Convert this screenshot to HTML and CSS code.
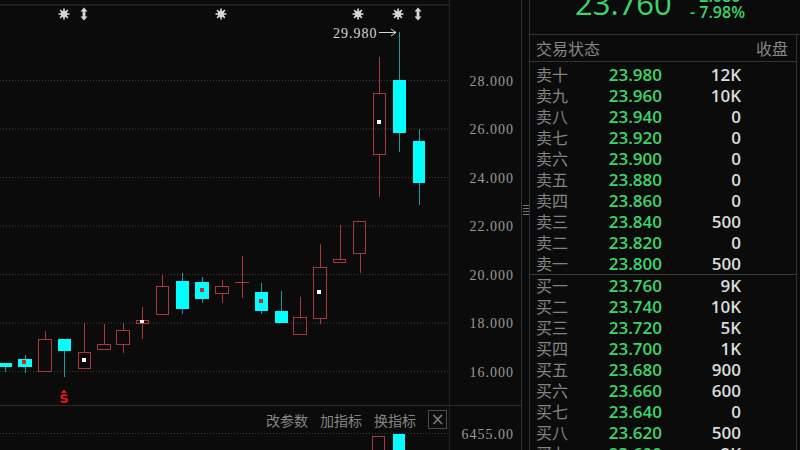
FILE: index.html
```html
<!DOCTYPE html>
<html lang="zh-CN">
<head>
    <meta charset="UTF-8">
    <meta name="viewport" content="width=device-width, initial-scale=1.0">
    <title>K线 - 盘口</title>
    <link rel="stylesheet" href="styles.css">
</head>
<body>
    <div class="terminal">
        <!-- 左侧：K线主图 + 副图 -->
        <div class="chart-pane">
            <svg class="kline" width="521" height="405" viewBox="0 0 521 405">
                <defs>
                    <g id="sun">
                        <circle r="3.2" fill="#d6d6d6"/>
                        <path d="M0 -5.5V5.5M-5.5 0H5.5M-3.9 -3.9L3.9 3.9M-3.9 3.9L3.9 -3.9" stroke="#d6d6d6" stroke-width="1.6"/>
                    </g>
                    <path id="updown" d="M0 -6.5L3.5 -2.5H1.4V2.5H3.5L0 6.5L-3.5 2.5H-1.4V-2.5H-3.5Z" fill="#d6d6d6"/>
                </defs>

                <line class="top-rule" x1="0" y1="5" x2="450" y2="5"/>
                <line class="frame" x1="449.5" y1="0" x2="449.5" y2="405"/>

                <!-- 网格线 -->
                <g class="grid">
                    <line x1="0" y1="80.5" x2="450" y2="80.5"/>
                    <line x1="0" y1="129" x2="450" y2="129"/>
                    <line x1="0" y1="177.5" x2="450" y2="177.5"/>
                    <line x1="0" y1="226" x2="450" y2="226"/>
                    <line x1="0" y1="274.5" x2="450" y2="274.5"/>
                    <line x1="0" y1="323" x2="450" y2="323"/>
                    <line x1="0" y1="371.5" x2="450" y2="371.5"/>
                </g>

                <!-- 价格坐标 -->
                <g class="axis">
                    <text x="514" y="86">28.000</text>
                    <text x="514" y="134">26.000</text>
                    <text x="514" y="183">24.000</text>
                    <text x="514" y="231">22.000</text>
                    <text x="514" y="280">20.000</text>
                    <text x="514" y="328">18.000</text>
                    <text x="514" y="377">16.000</text>
                </g>

                <!-- 信号标记 -->
                <use href="#sun" x="64" y="14"/>
                <use href="#updown" x="84" y="14"/>
                <use href="#sun" x="221" y="14"/>
                <use href="#sun" x="358" y="14"/>
                <use href="#sun" x="398" y="14"/>
                <use href="#updown" x="418" y="14"/>

                <!-- 阴线 -->
                <g class="down">
                    <line x1="5.5" y1="363" x2="5.5" y2="372"/><rect x="0" y="363" width="12" height="4"/>
                    <line x1="25.5" y1="355" x2="25.5" y2="373"/><rect x="18" y="359" width="14" height="8"/>
                    <line x1="64.5" y1="351" x2="64.5" y2="377"/><rect x="58" y="339" width="13" height="12"/>
                    <line x1="182.5" y1="273" x2="182.5" y2="314"/><rect x="176" y="281" width="13" height="28"/>
                    <line x1="202.5" y1="277" x2="202.5" y2="303"/><rect x="195" y="282" width="14" height="17"/>
                    <line x1="261.5" y1="283" x2="261.5" y2="314"/><rect x="255" y="292" width="13" height="19"/>
                    <line x1="281.5" y1="291" x2="281.5" y2="311"/><rect x="275" y="311" width="13" height="12"/>
                    <line x1="399.5" y1="32" x2="399.5" y2="152"/><rect x="393" y="80" width="13" height="53"/>
                    <line x1="419.5" y1="129" x2="419.5" y2="205"/><rect x="413" y="141" width="12" height="42"/>
                </g>

                <!-- 阳线（空心） -->
                <g class="up">
                    <line x1="45.5" y1="331" x2="45.5" y2="339"/><rect x="38.5" y="339.5" width="13" height="32"/>
                    <line x1="84.5" y1="323" x2="84.5" y2="352"/><rect x="78.5" y="352.5" width="12" height="16"/>
                    <line x1="104.5" y1="324" x2="104.5" y2="344"/><rect x="97.5" y="344.5" width="13" height="5"/>
                    <line x1="123.5" y1="323" x2="123.5" y2="330"/><line x1="123.5" y1="345" x2="123.5" y2="353"/><rect x="116.5" y="330.5" width="13" height="14"/>
                    <line x1="142.5" y1="307" x2="142.5" y2="320"/><line x1="142.5" y1="324" x2="142.5" y2="339"/><rect x="136.5" y="320.5" width="12" height="3"/>
                    <line x1="162.5" y1="275" x2="162.5" y2="286"/><rect x="156.5" y="286.5" width="12" height="28"/>
                    <line x1="222.5" y1="280" x2="222.5" y2="286"/><line x1="222.5" y1="294" x2="222.5" y2="303"/><rect x="215.5" y="286.5" width="13" height="7"/>
                    <line x1="242.5" y1="256" x2="242.5" y2="298"/><line x1="235" y1="282.5" x2="249" y2="282.5"/>
                    <line x1="300.5" y1="297" x2="300.5" y2="317"/><rect x="293.5" y="317.5" width="13" height="17"/>
                    <line x1="320.5" y1="244" x2="320.5" y2="267"/><line x1="320.5" y1="319" x2="320.5" y2="324"/><rect x="313.5" y="267.5" width="13" height="51"/>
                    <line x1="340.5" y1="225" x2="340.5" y2="259"/><rect x="333.5" y="259.5" width="12" height="3"/>
                    <line x1="360.5" y1="254" x2="360.5" y2="273"/><rect x="353.5" y="221.5" width="12" height="32"/>
                    <line x1="379.5" y1="57" x2="379.5" y2="93"/><line x1="379.5" y1="155" x2="379.5" y2="197"/><rect x="373.5" y="93.5" width="12" height="61"/>
                </g>

                <!-- K线内的小方块 -->
                <g class="dot-red">
                    <rect x="22" y="360" width="4" height="4"/>
                    <rect x="200" y="288" width="4" height="4"/>
                    <rect x="259" y="299" width="4" height="4"/>
                </g>
                <g class="dot-white">
                    <rect x="82" y="358" width="4" height="4"/>
                    <rect x="140" y="320" width="4" height="3"/>
                    <rect x="317" y="290" width="4" height="4"/>
                    <rect x="377" y="120" width="4" height="4"/>
                </g>

                <!-- 最高价标注 -->
                <text class="peak" x="333" y="38">29.980</text>
                <path class="peak-arrow" d="M379 32.5H396M391 29L396 32.5L391 36"/>

                <!-- 买卖点 -->
                <path class="signal" d="M64 389.5L67 393H61Z"/>
                <text class="signal" x="64" y="403">S</text>
            </svg>

            <div class="sub">
                <div class="sub-plot">
                    <div class="toolbar">
                        <span>改参数</span>
                        <span>加指标</span>
                        <span>换指标</span>
                        <button class="close">×</button>
                    </div>
                    <svg class="volume" width="449" height="17" viewBox="0 0 449 17">
                        <line class="grid-line" x1="0" y1="0.5" x2="449" y2="0.5"/>
                        <rect class="vol-up" x="372.5" y="3.5" width="12" height="20"/>
                        <rect class="vol-down" x="393" y="1" width="12" height="20"/>
                    </svg>
                </div>
                <div class="sub-axis">6455.00</div>
            </div>
        </div>

        <div class="splitter"><span class="grip"></span></div>

        <!-- 右侧：报价 + 十档盘口 -->
        <div class="quote-pane">
            <div class="quote-head">
                <div class="last">23.760</div>
                <div class="change">
                    <span>- 2.080</span>
                    <span>- 7.98%</span>
                </div>
            </div>

            <div class="book">
                <div class="book-head">
                    <span>交易状态</span>
                    <span>收盘</span>
                </div>
                <div class="asks">
                    <div class="row"><span class="lv">卖十</span><span class="px">23.980</span><span class="vol">12K</span></div>
                    <div class="row"><span class="lv">卖九</span><span class="px">23.960</span><span class="vol">10K</span></div>
                    <div class="row"><span class="lv">卖八</span><span class="px">23.940</span><span class="vol">0</span></div>
                    <div class="row"><span class="lv">卖七</span><span class="px">23.920</span><span class="vol">0</span></div>
                    <div class="row"><span class="lv">卖六</span><span class="px">23.900</span><span class="vol">0</span></div>
                    <div class="row"><span class="lv">卖五</span><span class="px">23.880</span><span class="vol">0</span></div>
                    <div class="row"><span class="lv">卖四</span><span class="px">23.860</span><span class="vol">0</span></div>
                    <div class="row"><span class="lv">卖三</span><span class="px">23.840</span><span class="vol">500</span></div>
                    <div class="row"><span class="lv">卖二</span><span class="px">23.820</span><span class="vol">0</span></div>
                    <div class="row"><span class="lv">卖一</span><span class="px">23.800</span><span class="vol">500</span></div>
                </div>
                <div class="bids">
                    <div class="row"><span class="lv">买一</span><span class="px">23.760</span><span class="vol">9K</span></div>
                    <div class="row"><span class="lv">买二</span><span class="px">23.740</span><span class="vol">10K</span></div>
                    <div class="row"><span class="lv">买三</span><span class="px">23.720</span><span class="vol">5K</span></div>
                    <div class="row"><span class="lv">买四</span><span class="px">23.700</span><span class="vol">1K</span></div>
                    <div class="row"><span class="lv">买五</span><span class="px">23.680</span><span class="vol">900</span></div>
                    <div class="row"><span class="lv">买六</span><span class="px">23.660</span><span class="vol">600</span></div>
                    <div class="row"><span class="lv">买七</span><span class="px">23.640</span><span class="vol">0</span></div>
                    <div class="row"><span class="lv">买八</span><span class="px">23.620</span><span class="vol">500</span></div>
                    <div class="row"><span class="lv">买九</span><span class="px">23.600</span><span class="vol">2K</span></div>
                </div>
            </div>
        </div>
    </div>
</body>
</html>
```

FILE: styles.css
```css
body {
    margin: 0;
    background-color: #0b0b0b;
    color: #8c8c8c;
    font-family: "Noto Sans CJK SC", sans-serif;
    overflow: hidden;
}

.terminal {
    display: flex;
    width: 800px;
    height: 450px;
    overflow: hidden;
}

/* 左侧图表 */
.chart-pane {
    width: 521px;
    flex-shrink: 0;
    display: flex;
    flex-direction: column;
    border-right: 1px solid #333;
}

.kline {
    display: block;
}

.top-rule {
    stroke: #1e1e1e;
    stroke-width: 2;
}

.frame {
    stroke: #242424;
}

.grid line,
.grid-line {
    stroke: #3c3c3c;
    stroke-dasharray: 1 2;
}

.axis text {
    font-family: "Liberation Serif", serif;
    font-size: 14px;
    letter-spacing: 1px;
    fill: #9a9a9a;
    text-anchor: end;
}

.down line {
    stroke: #1a9c9c;
}

.down rect {
    fill: #00ffff;
}

.up line,
.up rect {
    stroke: #a63a3a;
    fill: none;
}

.dot-red rect {
    fill: #c42a2a;
}

.dot-white rect {
    fill: #ffffff;
}

.peak {
    font-family: "Liberation Serif", serif;
    font-size: 14px;
    letter-spacing: 1px;
    fill: #d6d6d6;
}

.peak-arrow {
    stroke: #d6d6d6;
    fill: none;
}

path.signal {
    fill: #e01818;
}

text.signal {
    font-family: "DejaVu Sans", sans-serif;
    font-weight: bold;
    font-size: 13px;
    fill: #e01818;
    text-anchor: middle;
}

/* 副图 */
.sub {
    flex: 1;
    display: flex;
    border-top: 1px solid #2a2a2a;
}

.sub-plot {
    width: 449px;
    border-right: 1px solid #242424;
    display: flex;
    flex-direction: column;
}

.toolbar {
    height: 27px;
    display: flex;
    justify-content: flex-end;
    align-items: center;
    gap: 12px;
    padding-right: 2px;
    font-size: 14px;
    color: #858585;
}

.close {
    width: 19px;
    height: 19px;
    margin: 0;
    padding: 0;
    border: 1px solid #4a4a4a;
    background: none;
    color: #7a7a7a;
    font-size: 17px;
    line-height: 15px;
    font-family: "DejaVu Sans", sans-serif;
}

.volume {
    display: block;
}

.vol-up {
    stroke: #a63a3a;
    fill: none;
}

.vol-down {
    fill: #00ffff;
}

.sub-axis {
    flex: 1;
    text-align: right;
    padding: 21px 7px 0 0;
    font-family: "Liberation Serif", serif;
    font-size: 14px;
    letter-spacing: 1px;
    color: #9a9a9a;
}

/* 分隔条 */
.splitter {
    width: 8px;
    flex-shrink: 0;
    border-right: 1px solid #333;
    display: flex;
    justify-content: center;
    padding-top: 204px;
    box-sizing: border-box;
}

.grip {
    width: 6px;
    height: 11px;
    background-image: radial-gradient(circle, #777 0.8px, transparent 1px);
    background-size: 2px 3px;
}

/* 右侧报价 */
.quote-pane {
    flex: 1;
    display: flex;
    flex-direction: column;
    font-family: "Open Sans", sans-serif;
}

.quote-head {
    height: 34px;
    flex-shrink: 0;
    display: flex;
    border-bottom: 1px solid #333;
    color: #3bd56b;
}

.last {
    margin: -12px 0 0 45px;
    width: 115px;
    font-size: 31px;
    line-height: 31px;
}

.change {
    display: flex;
    flex-direction: column;
    margin-top: -12px;
    font-size: 16px;
    font-weight: 600;
    line-height: 16px;
}

.book {
    flex: 1;
    margin-right: 3px;
    border-right: 1px solid #333;
}

.book-head {
    height: 26px;
    display: flex;
    justify-content: space-between;
    align-items: center;
    padding: 0 8px 0 6px;
    border-bottom: 1px solid #333;
    font-family: "Noto Sans CJK SC", sans-serif;
    font-size: 16px;
    color: #858585;
}

.asks {
    padding-top: 2px;
    border-bottom: 1px solid #3a3a3a;
}

.row {
    height: 21px;
    display: grid;
    grid-template-columns: 60px 66px 79px;
    align-items: center;
    padding-left: 6px;
}

.lv {
    font-family: "Noto Sans CJK SC", sans-serif;
    font-size: 16px;
    line-height: 21px;
    color: #838383;
}

.px {
    text-align: right;
    font-size: 17px;
    font-weight: 600;
    line-height: 21px;
    color: #3bd56b;
}

.vol {
    text-align: right;
    font-size: 17px;
    font-weight: 600;
    line-height: 21px;
    color: #dcdcdc;
}
```
